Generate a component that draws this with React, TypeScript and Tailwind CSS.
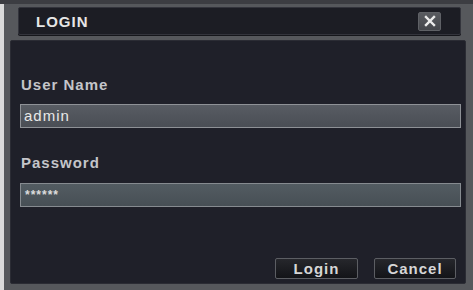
import React from "react";

const font = { fontFamily: '"Liberation Sans", Arial, sans-serif' };

export default function App() {
  return (
    <div
      className="w-[473px] h-[290px] flex flex-col bg-[#56585c] overflow-hidden"
      style={font}
    >
      <div className="h-[4px] bg-[#3c3d42]" />
      <div className="flex-1 flex">
        <div className="w-[4px] bg-[#dadada]" />
        <div className="flex-1 flex flex-col pl-[6px] pr-[7px] pt-[3px] pb-[6px]">
          <div className="ml-[8px] mr-[5px] h-[28px] bg-[#1c1d24] border border-[#33343c] rounded-[2px] flex items-center justify-between pl-[17px] pr-[19px] shadow-[0_1px_0_#15161b]">
            <span className="text-[15px] font-bold tracking-[1px] text-[#e6e6e6] leading-none">
              LOGIN
            </span>
            <div className="w-[23px] h-[19px] rounded-[2px] bg-gradient-to-b from-[#595b60] to-[#44464b] border border-[#5f6166] flex items-center justify-center">
              <svg width="12" height="12" viewBox="0 0 12 12">
                <path
                  d="M2 2 L10 10 M10 2 L2 10"
                  stroke="#ececec"
                  strokeWidth="2.4"
                  strokeLinecap="square"
                />
              </svg>
            </div>
          </div>
          <div className="mt-[5px] flex-1 bg-[#1f2029] border border-[#2b2c34] rounded-[2px] flex flex-col pt-[35px] pb-[4px] pl-[9px] pr-[4px]">
            <div className="text-[15px] font-bold tracking-[1px] text-[#c4c5c9] leading-[18px] pl-[1px]">
              User Name
            </div>
            <div className="mt-[10px] h-[24px] bg-gradient-to-b from-[#585c63] to-[#4a4e55] border border-[#8e9196] flex items-center pl-[3px] text-[15px] tracking-[1px] text-[#e8e8e8]">
              admin
            </div>
            <div className="mt-[26px] text-[15px] font-bold tracking-[1px] text-[#c4c5c9] leading-[18px] pl-[1px]">
              Password
            </div>
            <div className="mt-[11px] h-[24px] bg-gradient-to-b from-[#535c62] to-[#474f55] border border-[#868b90] flex items-center pl-[4px] text-[12px] tracking-[1px] font-bold text-[#dcdcdc]">
              ******
            </div>
            <div className="flex-1" />
            <div className="flex justify-end gap-[16px] pr-[5px]">
              <button className="w-[83px] h-[21px] bg-gradient-to-b from-[#26272c] to-[#131418] border border-[#5c5e63] rounded-[2px] text-[15px] font-bold tracking-[1px] text-[#d6d6d6] leading-none">
                Login
              </button>
              <button className="w-[82px] h-[21px] bg-gradient-to-b from-[#26272c] to-[#131418] border border-[#5c5e63] rounded-[2px] text-[15px] font-bold tracking-[1px] text-[#d6d6d6] leading-none">
                Cancel
              </button>
            </div>
          </div>
        </div>
      </div>
    </div>
  );
}
